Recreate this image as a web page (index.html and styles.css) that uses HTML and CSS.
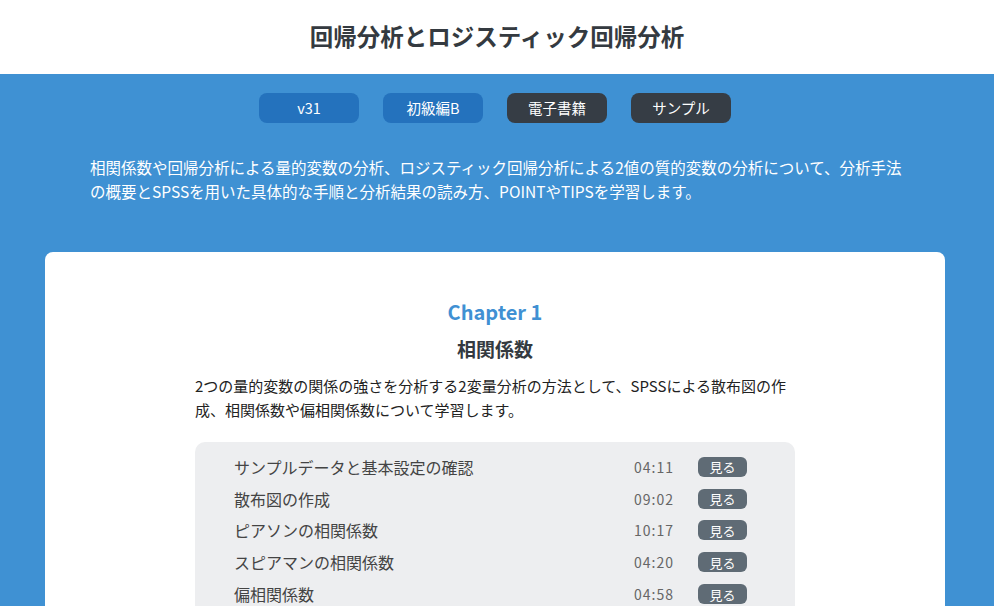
FILE: index.html
```html
<!DOCTYPE html>
<html lang="ja">
<head>
<meta charset="utf-8">
<title>回帰分析とロジスティック回帰分析</title>
<link rel="stylesheet" href="styles.css">
</head>
<body>
<header class="header">
  <h1 class="title">回帰分析とロジスティック回帰分析</h1>
</header>
<section class="hero">
  <div class="tags">
    <span class="tag tag-blue">v31</span>
    <span class="tag tag-blue">初級編B</span>
    <span class="tag tag-dark">電子書籍</span>
    <span class="tag tag-dark">サンプル</span>
  </div>
  <p class="lead">相関係数や回帰分析による量的変数の分析、ロジスティック回帰分析による2値の質的変数の分析について、分析手法の概要とSPSSを用いた具体的な手順と分析結果の読み方、POINTやTIPSを学習します。</p>
  <div class="card">
    <div class="chapter">Chapter 1</div>
    <h2 class="chapter-title">相関係数</h2>
    <p class="chapter-desc">2つの量的変数の関係の強さを分析する2変量分析の方法として、SPSSによる散布図の作成、相関係数や偏相関係数について学習します。</p>
    <ul class="lessons">
      <li class="lesson"><span class="lesson-name">サンプルデータと基本設定の確認</span><span class="lesson-time">04:11</span><span class="watch">見る</span></li>
      <li class="lesson"><span class="lesson-name">散布図の作成</span><span class="lesson-time">09:02</span><span class="watch">見る</span></li>
      <li class="lesson"><span class="lesson-name">ピアソンの相関係数</span><span class="lesson-time">10:17</span><span class="watch">見る</span></li>
      <li class="lesson"><span class="lesson-name">スピアマンの相関係数</span><span class="lesson-time">04:20</span><span class="watch">見る</span></li>
      <li class="lesson"><span class="lesson-name">偏相関係数</span><span class="lesson-time">04:58</span><span class="watch">見る</span></li>
    </ul>
  </div>
</section>
</body>
</html>
```

FILE: styles.css
```css
* { box-sizing: border-box; }
html, body { margin: 0; padding: 0; }
body {
  font-family: "Noto Sans CJK JP", "Noto Sans", sans-serif;
  background: #3f91d3;
  color: #222;
}
.header {
  background: #fff;
  height: 74px;
  display: flex;
  align-items: center;
  justify-content: center;
}
.title {
  margin: 0;
  font-size: 23.5px;
  font-weight: 700;
  color: #343a40;
  line-height: 1;
}
.hero {
  background: #3f91d3;
  padding: 19px 49px 0 45px;
}
.tags {
  display: flex;
  justify-content: center;
  gap: 24px;
}
.tag {
  width: 100px;
  height: 30px;
  border-radius: 8px;
  display: flex;
  align-items: center;
  justify-content: center;
  color: #fff;
  font-size: 14.5px;
  font-weight: 400;
  line-height: 1;
}
.tag-blue { background: #2472bd; }
.tag-dark { background: #363d45; }
.lead {
  margin: 33px 0 0;
  padding: 0 0 0 45px;
  color: #fff;
  font-size: 15.5px;
  line-height: 23.5px;
  max-width: 860px;
}
.card {
  background: #fff;
  border-radius: 8px 8px 0 0;
  margin-top: 49px;
  padding: 46px 0 40px;
  display: flex;
  flex-direction: column;
  align-items: center;
}
.chapter {
  color: #4090d3;
  font-size: 20px;
  font-weight: 700;
  line-height: 28px;
}
.chapter-title {
  margin: 9px 0 0;
  font-size: 19px;
  font-weight: 700;
  color: #343a40;
  line-height: 28px;
}
.chapter-desc {
  margin: 11px 0 0;
  width: 600px;
  font-size: 15px;
  line-height: 24px;
  color: #222;
}
.lessons {
  list-style: none;
  margin: 20px 0 0;
  padding: 9px 48px 10px 39px;
  width: 600px;
  background: #edeef0;
  border-radius: 10px;
}
.lesson {
  display: grid;
  grid-template-columns: 1fr auto auto;
  align-items: center;
  column-gap: 24px;
  height: 31.8px;
}
.lesson-name {
  font-size: 16px;
  color: #444;
}
.lesson-time {
  font-size: 14px;
  color: #666;
  letter-spacing: 1px;
}
.watch {
  width: 49px;
  height: 20px;
  border-radius: 6px;
  background: #5f6b75;
  color: #fff;
  font-size: 13px;
  display: flex;
  align-items: center;
  justify-content: center;
  line-height: 1;
}
```
